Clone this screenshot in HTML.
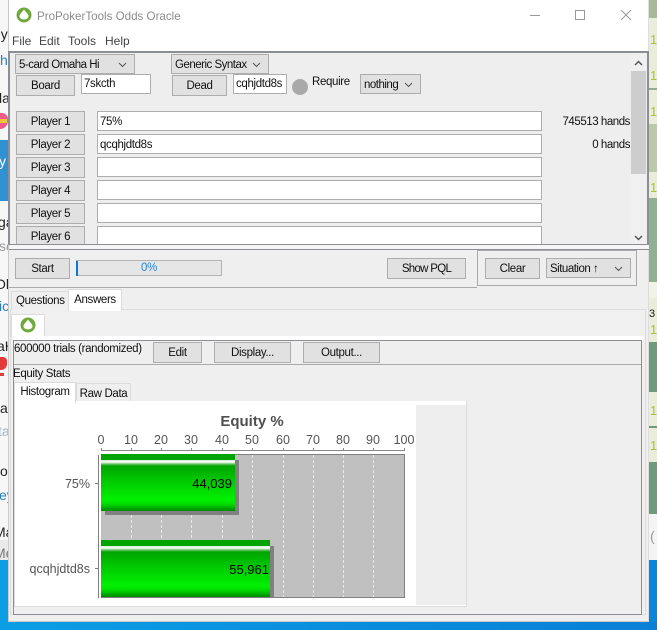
<!DOCTYPE html>
<html><head><meta charset="utf-8"><style>
html,body{margin:0;padding:0;width:657px;height:630px;overflow:hidden;background:#fff}
body{position:relative;font:11.5px/16px "Liberation Sans",sans-serif;letter-spacing:-.35px;color:#111}
svg{letter-spacing:0}
.a{position:absolute;box-sizing:border-box;white-space:nowrap}
.b{position:absolute;box-sizing:border-box;background:#e1e1e1;border:1px solid #adadad;text-align:center;white-space:nowrap;color:#111;padding-top:1px}
.i{position:absolute;box-sizing:border-box;background:#fff;border:1px solid #adadad;white-space:nowrap;padding-left:2px;color:#111;line-height:20px}
.c{position:absolute;box-sizing:border-box;background:#e1e1e1;border:1px solid #adadad;white-space:nowrap;padding-left:3px;color:#111;line-height:20px;letter-spacing:-.5px}
.c svg{position:absolute;right:7px;top:7px}
.f{position:absolute;left:0;font-size:14px;line-height:16px;white-space:nowrap;letter-spacing:0}
</style></head><body>
<!-- desktop left -->
<div class="a" style="left:0;top:0;width:8px;height:560px;background:#f7f7f7;overflow:hidden">
<div class="a" style="left:0;top:140px;width:8px;height:61px;background:#3190cf"></div>
<div class="a" style="left:0;top:540px;width:8px;height:20px;background:#eaeaea"></div>
<div class="f" style="left:-7px;top:26px;color:#222">ny</div>
<div class="f" style="left:0;top:52px;color:#2a7fc0">h</div>
<div class="f" style="left:-1px;top:90px;color:#222">la</div>
<div class="a" style="left:0;top:113px;width:8px;height:16px;background:#ee5a8a;border-radius:0 6px 8px 0"></div>
<div class="a" style="left:0;top:119px;width:7px;height:4px;background:#f2c23a"></div>
<div class="f" style="left:-1px;top:153px;color:#fff">y</div>
<div class="f" style="left:-2px;top:214px;color:#222">ga</div>
<div class="f" style="left:-1px;top:238px;color:#999">se</div>
<div class="f" style="left:-5px;top:276px;color:#222">Ol</div>
<div class="f" style="left:-1px;top:298px;color:#2a7fc0">ic</div>
<div class="f" style="left:-3px;top:338px;color:#222">aH</div>
<div class="a" style="left:0;top:357px;width:7px;height:13px;background:#e33a3a;border-radius:0 4px 6px 0"></div>
<div class="a" style="left:0;top:373px;width:4px;height:3px;background:#e33a3a"></div>
<div class="f" style="left:0;top:400px;color:#222">a</div>
<div class="f" style="left:-2px;top:423px;color:#9db6cc">ta</div>
<div class="f" style="left:0;top:463px;color:#222">o</div>
<div class="f" style="left:-1px;top:487px;color:#2a7fc0">ey</div>
<div class="f" style="left:-6px;top:524px;color:#222">Ma</div>
<div class="f" style="left:-6px;top:545px;color:#777">Me</div>
</div>
<div class="a" style="left:0;top:560px;width:8px;height:70px;background:#0b9ee4"></div>
<!-- desktop right -->
<div class="a" style="left:649px;top:0;width:8px;height:560px;background:#e9edd9;overflow:hidden">
<div class="a" style="left:0;top:0;width:8px;height:18px;background:#a9b897"></div>
<div class="a" style="left:0;top:88px;width:8px;height:2px;background:#94ab8c"></div>
<div class="a" style="left:0;top:124px;width:8px;height:48px;background:#bcc7ac"></div>
<div class="a" style="left:0;top:198px;width:8px;height:84px;background:#8fb091"></div>
<div class="a" style="left:0;top:282px;width:8px;height:16px;background:#f1f3e6"></div>
<div class="a" style="left:0;top:342px;width:8px;height:50px;background:#6f9b7c"></div>
<div class="a" style="left:0;top:426px;width:8px;height:2px;background:#6f9b7c"></div>
<div class="a" style="left:0;top:462px;width:8px;height:52px;background:#6f9b7c"></div>
<div class="a" style="left:0;top:514px;width:8px;height:46px;background:#f4f4f4"></div>
<div class="f" style="left:1px;top:32px;font-size:13px;color:#a8c23a">1</div>
<div class="f" style="left:1px;top:68px;font-size:13px;color:#a8c23a">1</div>
<div class="f" style="left:1px;top:104px;font-size:13px;color:#a8c23a">1</div>
<div class="f" style="left:1px;top:180px;font-size:13px;color:#a8c23a">1</div>
<div class="f" style="left:1px;top:322px;font-size:13px;color:#a8c23a">1</div>
<div class="f" style="left:1px;top:403px;font-size:13px;color:#a8c23a">1</div>
<div class="f" style="left:1px;top:438px;font-size:13px;color:#a8c23a">1</div>
<div class="f" style="left:0;top:306px;font-size:11px;color:#222">3</div>
<div class="f" style="left:1px;top:528px;font-size:14px;color:#999">(</div>
</div>
<div class="a" style="left:649px;top:560px;width:8px;height:70px;background:#0a86da"></div>
<div class="a" style="left:0;top:622px;width:657px;height:8px;background:linear-gradient(90deg,#0b9ee4,#0a7fd6)"></div>
<!-- window -->
<div class="a" style="left:8px;top:0;width:641px;height:622px;background:#efefef;border:1px solid #c9c9c9;border-top:0;border-right:1px solid #ddd"></div>
<div class="a" style="left:9px;top:0;width:639px;height:51px;background:#fff"></div>
<svg class="a" style="left:16px;top:7px" width="16" height="16" viewBox="0 0 16 16"><circle cx="8" cy="8" r="7.5" fill="#6fa93c"/><path d="M8 2.500C9.500 5 12.500 6.600 12.500 9.400 12.500 11.600 9.600 12.400 8 12.400 6.400 12.400 3.500 11.600 3.500 9.400 3.500 6.600 6.500 5 8 2.500Z" fill="#fff"/></svg>
<div class="a" style="left:37px;top:9px;color:#8c8c8c;font-size:11.600px;letter-spacing:0">ProPokerTools Odds Oracle</div>
<div class="a" style="left:12px;top:33px;color:#444;font-size:12px;letter-spacing:0">File</div>
<div class="a" style="left:39px;top:33px;color:#444;font-size:12px;letter-spacing:0">Edit</div>
<div class="a" style="left:68px;top:33px;color:#444;font-size:12px;letter-spacing:0">Tools</div>
<div class="a" style="left:105px;top:33px;color:#444;font-size:12px;letter-spacing:0">Help</div>
<svg class="a" style="left:525px;top:5px" width="115" height="20" fill="none" stroke="#999"><path d="M5 10.500H15"/><rect x="50.500" y="5.500" width="9" height="9"/><path d="M96 5L106 15M106 5L96 15"/></svg>
<!-- top panel -->
<div class="a" style="left:8px;top:51px;width:641px;height:194px;background:#eee;border:2px solid #8b8e92;border-bottom-width:1px"></div>
<div class="a" style="left:9px;top:245px;width:640px;height:4px;background:#f6f6f6"></div>
<div class="a" style="left:9px;top:249px;width:640px;height:1px;background:#8b8e92"></div>
<div class="c" style="left:15px;top:54px;width:120px;height:20px">5-card Omaha Hi<svg width="9" height="6" fill="none" stroke="#555"><path d="M1 1L4.500 4.500 8 1"/></svg></div>
<div class="c" style="left:171px;top:54px;width:98px;height:20px">Generic Syntax<svg width="9" height="6" fill="none" stroke="#555"><path d="M1 1L4.500 4.500 8 1"/></svg></div>
<div class="b" style="left:16px;top:75px;width:59px;height:21px;line-height:19px">Board</div>
<div class="i" style="left:81px;top:74px;width:70px;height:20px;line-height:18px">7skcth</div>
<div class="b" style="left:172px;top:75px;width:55px;height:21px;line-height:19px">Dead</div>
<div class="i" style="left:233px;top:74px;width:54px;height:20px;line-height:18px;padding-left:2px">cqhjdtd8s</div>
<div class="a" style="left:292px;top:79px;width:16px;height:16px;border-radius:50%;background:#a9a9a9"></div>
<div class="a" style="left:312px;top:74px">Require</div>
<div class="c" style="left:360px;top:74px;width:61px;height:20px">nothing<svg width="9" height="6" fill="none" stroke="#555"><path d="M1 1L4.500 4.500 8 1"/></svg></div>
<div class="b" style="left:16px;top:111px;width:69px;height:21px;line-height:19px">Player 1</div>
<div class="i" style="left:97px;top:111px;width:445px;height:20px">75%</div>
<div class="b" style="left:16px;top:134px;width:69px;height:21px;line-height:19px">Player 2</div>
<div class="i" style="left:97px;top:134px;width:445px;height:20px">qcqhjdtd8s</div>
<div class="b" style="left:16px;top:157px;width:69px;height:21px;line-height:19px">Player 3</div>
<div class="i" style="left:97px;top:157px;width:445px;height:20px"></div>
<div class="b" style="left:16px;top:180px;width:69px;height:21px;line-height:19px">Player 4</div>
<div class="i" style="left:97px;top:180px;width:445px;height:20px"></div>
<div class="b" style="left:16px;top:203px;width:69px;height:21px;line-height:19px">Player 5</div>
<div class="i" style="left:97px;top:203px;width:445px;height:20px"></div>
<div class="b" style="left:16px;top:226px;width:69px;height:18px;line-height:19px;border-bottom:0">Player 6</div>
<div class="i" style="left:97px;top:226px;width:445px;height:18px;border-bottom:0"></div>
<div class="a" style="left:530px;top:114px;width:100px;text-align:right;letter-spacing:-.45px">745513 hands</div>
<div class="a" style="left:530px;top:137px;width:100px;text-align:right;letter-spacing:-.45px">0 hands</div>
<!-- scrollbar -->
<div class="a" style="left:631px;top:53px;width:15px;height:191px;background:#f0f0f0"></div>
<div class="a" style="left:631px;top:71px;width:15px;height:103px;background:#cdcdcd"></div>
<svg class="a" style="left:631px;top:53px" width="15" height="191" fill="none" stroke="#555" stroke-width="1.500"><path d="M4 12L7.500 8.500 11 12M4 183L7.500 186.500 11 183"/></svg>
<!-- start row -->
<div class="b" style="left:15px;top:258px;width:55px;height:21px;line-height:19px">Start</div>
<div class="a" style="left:76px;top:260px;width:146px;height:16px;background:#e6e6e6;border:1px solid #b4b4b4;text-align:center;line-height:14px;color:#2a86d8">0%</div>
<div class="a" style="left:76px;top:261px;width:2px;height:15px;background:#0a78d7"></div>
<div class="b" style="left:387px;top:258px;width:79px;height:21px;line-height:19px;letter-spacing:-.7px">Show PQL</div>
<div class="a" style="left:9px;top:287px;width:468px;height:1px;background:#a9a9a9"></div>
<div class="a" style="left:477px;top:250px;width:160px;height:36px;border:1px solid #a9a9a9"></div>
<div class="b" style="left:485px;top:258px;width:55px;height:21px;line-height:19px">Clear</div>
<div class="c" style="left:546px;top:258px;width:85px;height:20px">Situation ↑<svg width="9" height="6" fill="none" stroke="#555"><path d="M1 1L4.500 4.500 8 1"/></svg></div>
<!-- tabs -->
<div class="a" style="left:10px;top:309px;width:636px;height:306px;background:#f0f0f0;border:1px solid #dcdcdc"></div>
<div class="a" style="left:11px;top:291px;width:58px;height:19px;background:#efefef;border:1px solid #dcdcdc;border-bottom:0;padding-left:4px;line-height:19px">Questions</div>
<div class="a" style="left:68px;top:289px;width:54px;height:22px;background:#fff;border:1px solid #dcdcdc;border-bottom:0;text-align:center;line-height:20px">Answers</div>
<div class="a" style="left:11px;top:314px;width:34px;height:23px;background:#fff;border:1px solid #dcdcdc;border-bottom:0"></div>
<svg class="a" style="left:20px;top:317px" width="16" height="16" viewBox="0 0 16 16"><circle cx="8" cy="8" r="7.500" fill="#6fa93c"/><path d="M8 2.500C9.500 5 12.500 6.600 12.500 9.400 12.500 11.600 9.600 12.400 8 12.400 6.400 12.400 3.500 11.600 3.500 9.400 3.500 6.600 6.500 5 8 2.500Z" fill="#fff"/></svg>
<div class="a" style="left:13px;top:336px;width:631px;height:4px;background:#fff"></div>
<div class="a" style="left:13px;top:340px;width:629px;height:275px;background:#efefef;border:1px solid #8b8e92"></div>
<div class="a" style="left:14px;top:364px;width:627px;height:1px;background:#a9a9a9"></div>
<div class="a" style="left:14px;top:341px">600000 trials (randomized)</div>
<div class="b" style="left:153px;top:342px;width:49px;height:21px;line-height:19px">Edit</div>
<div class="b" style="left:214px;top:342px;width:77px;height:21px;line-height:19px">Display...</div>
<div class="b" style="left:303px;top:342px;width:77px;height:21px;line-height:19px">Output...</div>
<div class="a" style="left:13px;top:366px">Equity Stats</div>
<div class="a" style="left:76px;top:383px;width:55px;height:19px;background:#efefef;border:1px solid #dcdcdc;border-bottom:0;text-align:center;line-height:20px">Raw Data</div>
<div class="a" style="left:14px;top:401px;width:453px;height:206px;background:#fff;border:1px solid #dcdcdc;border-width:0 1px 1px 1px"></div>
<div class="a" style="left:14px;top:382px;width:62px;height:21px;background:#fff;border:1px solid #dcdcdc;border-bottom:0;text-align:center;line-height:19px">Histogram</div>
<div class="a" style="left:416px;top:405px;width:50px;height:200px;background:#eee"></div>
<!-- chart -->
<svg class="a" style="left:0;top:400px" width="470" height="210" viewBox="0 400 470 210">
<defs><linearGradient id="g" x1="0" y1="0" x2="0" y2="1">
<stop offset="0" stop-color="#00a400"/><stop offset=".105" stop-color="#00a400"/><stop offset=".106" stop-color="#cfe9cf"/><stop offset=".14" stop-color="#fff"/><stop offset=".18" stop-color="#5cc05c"/><stop offset=".21" stop-color="#00a400"/><stop offset=".4" stop-color="#00c000"/><stop offset=".8" stop-color="#00f000"/><stop offset=".87" stop-color="#00e000"/><stop offset="1" stop-color="#008800"/></linearGradient></defs>
<text x="252" y="426" text-anchor="middle" font-family="Liberation Sans" font-size="15" font-weight="bold" fill="#505050">Equity %</text>
<g font-family="Liberation Sans" font-size="12.500" fill="#555" text-anchor="middle">
<text x="101" y="444">0</text><text x="131" y="444">10</text><text x="161" y="444">20</text><text x="191" y="444">30</text><text x="222" y="444">40</text><text x="252" y="444">50</text><text x="283" y="444">60</text><text x="313" y="444">70</text><text x="343" y="444">80</text><text x="373" y="444">90</text><text x="404" y="444">100</text></g>
<path d="M101 450.500H405M101.500 448V451M131.500 448V451M161.500 448V451M191.500 448V451M222.500 448V451M252.500 448V451M283.500 448V451M313.500 448V451M343.500 448V451M373.500 448V451M404.500 448V451" stroke="#888" fill="none"/>
<rect x="101" y="455" width="304" height="142" fill="#c0c0c0"/>
<path d="M131.500 455V597M161.500 455V597M191.500 455V597M222.500 455V597M252.500 455V597M283.500 455V597M313.500 455V597M343.500 455V597M373.500 455V597" stroke="#e8e8e8" stroke-dasharray="3 2" fill="none"/>
<path d="M101 454.500H404.500V597.500H101" stroke="#808080" fill="none"/>
<path d="M98.500 455V598M95 483.500H98M95 568.500H98" stroke="#808080" fill="none"/>
<rect x="105" y="460" width="134" height="55" fill="#808080"/>
<rect x="105" y="546" width="169" height="51" fill="#808080"/>
<rect x="101" y="454" width="134" height="57" fill="url(#g)"/>
<rect x="101" y="540" width="169" height="57" fill="url(#g)"/>
<g font-family="Liberation Sans" text-anchor="end">
<text x="232" y="488" fill="#000" font-size="13">44,039</text><text x="269" y="574" fill="#000" font-size="13">55,961</text>
<text x="90" y="488" fill="#555" font-size="12.500">75%</text><text x="90" y="573" fill="#555" font-size="12.500">qcqhjdtd8s</text></g>
</svg>
</body></html>
